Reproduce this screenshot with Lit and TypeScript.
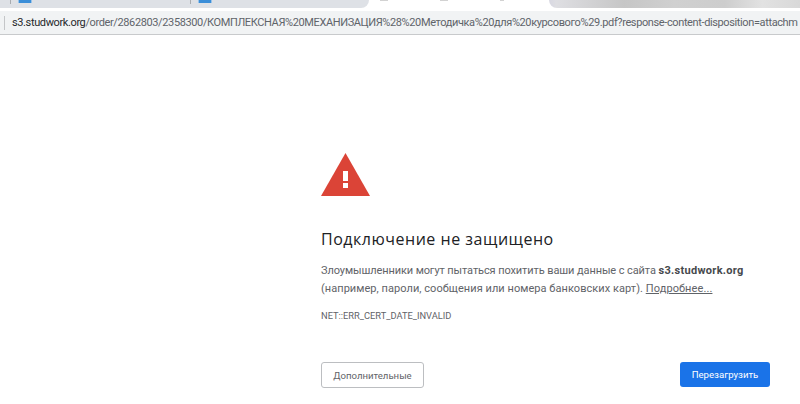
import { LitElement, html, css } from "lit";
import { customElement } from "lit/decorators.js";

const FONT = css`Roboto, "Open Sans", sans-serif`;

@customElement("app-root")
export class AppRoot extends LitElement {
  static styles = css`
    :host {
      display: block;
      width: 800px;
      height: 404px;
      overflow: hidden;
      background: #fff;
      font-family: ${FONT};
    }
    .tabs {
      height: 8px;
      display: flex;
      background: #fff;
      overflow: hidden;
    }
    .tabgroup {
      width: 369px;
      background: #dee1e6;
      border-bottom-right-radius: 8px;
      display: flex;
    }
    .tab {
      flex: 0 0 180px;
      display: flex;
      padding-left: 10px;
      box-sizing: border-box;
    }
    .sep {
      width: 1px;
      height: 4px;
      background: #a9acb0;
      margin-right: 7px;
    }
    .fav {
      width: 14px;
      height: 3px;
      background: #3b8ed8;
      border-left: 1px solid #9cc4e8;
      border-right: 1px solid #9cc4e8;
      box-sizing: border-box;
    }
    .active {
      width: 150px;
      display: flex;
      align-items: flex-start;
      gap: 52px;
      padding-left: 11px;
      box-sizing: border-box;
    }
    .active i {
      width: 8px;
      height: 1px;
      background: #b4b4b4;
      opacity: 0.6;
    }
    .active i:last-child {
      width: 4px;
    }
    .rest {
      flex: 1;
      border-bottom-left-radius: 8px;
      background: linear-gradient(90deg, #d8d8e2, #dedee2 3%, #c6c6c6 30%, #d0d0d0 50%, #cdcdcd 70%, #e2e2e2 85%, #d8d8d8);
      margin-left: 30px;
    }
    .addr {
      height: 24px;
      box-sizing: border-box;
      background: #f1f3f4;
      border-bottom: 1px solid #c8cacc;
      padding-left: 4px;
      display: flex;
      align-items: center;
      margin-top: 3px;
      white-space: nowrap;
      overflow: hidden;
      font-size: 11px;
      letter-spacing: -0.38px;
      color: #60646a;
    }
    .bar {
      flex: none;
      width: 1px;
      height: 14px;
      background: #c4c6c8;
      margin-right: 7px;
    }
    .host {
      color: #26282b;
    }
    main {
      width: 450px;
      margin-left: 321px;
      padding-top: 118px;
    }
    .icon {
      display: block;
      width: 49px;
      height: 43px;
    }
    h1 {
      margin: 32px 0 0;
      font-family: "Open Sans", sans-serif;
      font-size: 16px;
      line-height: 22px;
      font-weight: 400;
      letter-spacing: 0.52px;
      color: #202124;
    }
    p {
      margin: 12px 0 0;
      font-size: 11px;
      line-height: 18px;
      color: #5f6368;
      white-space: nowrap;
    }
    .tight {
      letter-spacing: -0.1px;
    }
    .loose {
      letter-spacing: 0.05px;
    }
    b {
      font-weight: 700;
      letter-spacing: 0.3px;
      color: #46494d;
    }
    a {
      color: #5f6368;
      letter-spacing: 0.1px;
      text-decoration: underline;
    }
    .code {
      margin-top: 12px;
      font-size: 9.3px;
      line-height: 12px;
      color: #5f6368;
    }
    .buttons {
      margin-top: 40px;
      display: flex;
      justify-content: space-between;
      align-items: flex-start;
      padding-right: 1px;
    }
    button {
      box-sizing: border-box;
      border-radius: 3px;
      font-family: inherit;
      font-size: 9.6px;
      padding: 0;
    }
    .sec {
      width: 103px;
      height: 26px;
      background: #fff;
      border: 1px solid #bcbec1;
      color: #5f6368;
    }
    .pri {
      width: 90px;
      height: 25px;
      background: #1a73e8;
      border: none;
      color: #fff;
    }
  `;

  render() {
    return html`
      <div class="tabs">
        <div class="tabgroup">
          <div class="tab"><i class="sep"></i><i class="fav"></i></div>
          <div class="tab"><i class="sep"></i><i class="fav"></i></div>
        </div>
        <div class="active"><i></i><i></i><i></i></div>
        <div class="rest"></div>
      </div>
      <div class="addr">
        <i class="bar"></i><span><span class="host">s3.studwork.org</span>/order/2862803/2358300/КОМПЛЕКСНАЯ%20МЕХАНИЗАЦИЯ%28%20Методичка%20для%20курсового%29.pdf?response-content-disposition=attachm</span>
      </div>
      <main>
        <svg class="icon" viewBox="0 0 49 43" aria-hidden="true">
          <path d="M24.5 0 49 43H0Z" fill="#db4437" />
          <rect x="22" y="18" width="5" height="10" fill="#fff" />
          <rect x="22" y="30" width="5" height="5" fill="#fff" />
        </svg>
        <h1>Подключение не защищено</h1>
        <p>
          <span class="tight">Злоумышленники могут пытаться похитить ваши данные с сайта</span> <b>s3.studwork.org</b><br />
          <span class="loose">(например, пароли, сообщения или номера банковских карт).</span> <a>Подробнее...</a>
        </p>
        <div class="code">NET::ERR_CERT_DATE_INVALID</div>
        <div class="buttons">
          <button class="sec">Дополнительные</button>
          <button class="pri">Перезагрузить</button>
        </div>
      </main>
    `;
  }
}
